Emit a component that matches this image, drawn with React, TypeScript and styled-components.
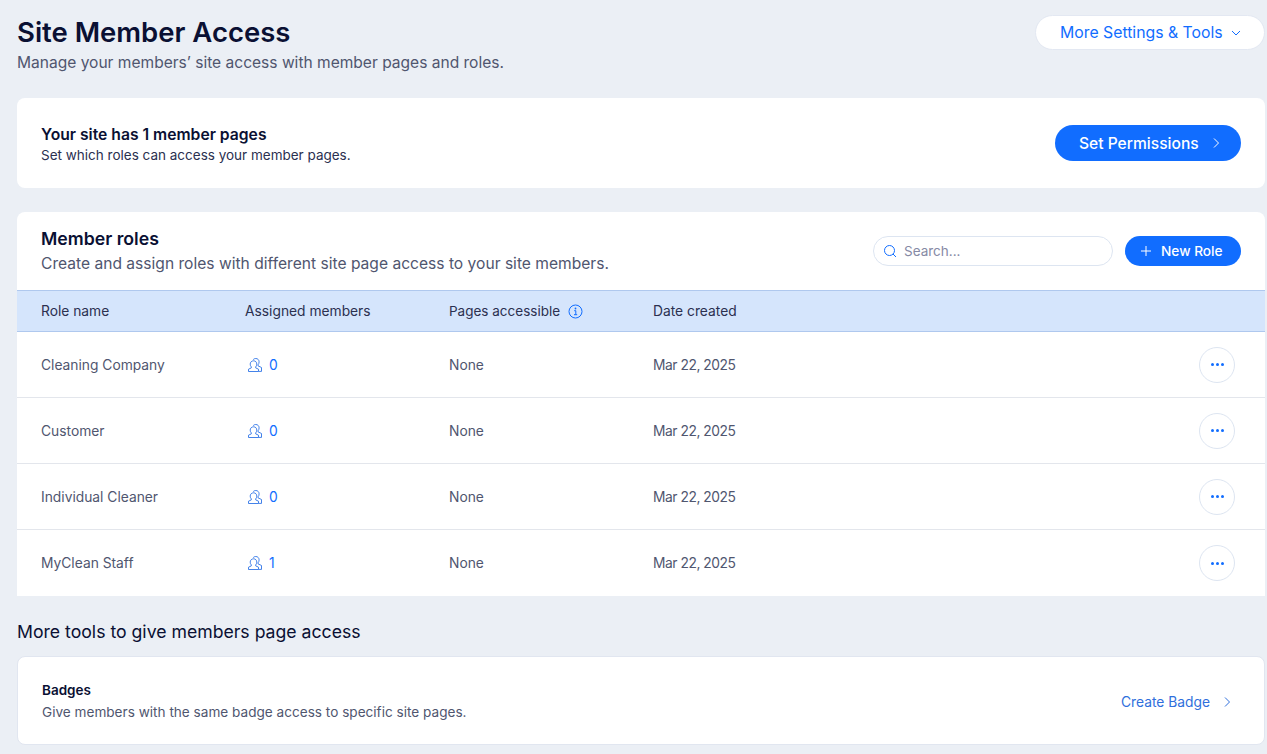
import styled, { createGlobalStyle } from "styled-components";

const GlobalStyle = createGlobalStyle`
  html, body {
    margin: 0;
    padding: 0;
    background: #ebeff5;
  }
  * {
    box-sizing: border-box;
  }
  body {
    font-family: Inter, "Noto Sans", sans-serif;
    color: #0a1033;
  }
`;

const roles = [
  { name: "Cleaning Company", members: 0 },
  { name: "Customer", members: 0 },
  { name: "Individual Cleaner", members: 0 },
  { name: "MyClean Staff", members: 1 },
];

const ChevronRight = ({ color }: { color: string }) => (
  <svg width="12" height="12" viewBox="0 0 12 12" fill="none">
    <path d="M4 1.5 8.5 6 4 10.5" stroke={color} strokeWidth="1" />
  </svg>
);

const ChevronDown = () => (
  <svg width="12" height="12" viewBox="0 0 12 12" fill="none">
    <path d="M2 4 6 8 10 4" stroke="#116dff" strokeWidth="1" />
  </svg>
);

const SearchIcon = () => (
  <svg width="14" height="14" viewBox="0 0 14 14" fill="none">
    <circle cx="6.5" cy="6.5" r="5" stroke="#116dff" strokeWidth="1" />
    <path d="M10 10l3 3" stroke="#116dff" strokeWidth="1" />
  </svg>
);

const PlusIcon = () => (
  <svg width="12" height="12" viewBox="0 0 12 12" fill="none">
    <path d="M6 1v10M1 6h10" stroke="#fff" strokeWidth="1" />
  </svg>
);

const InfoIcon = () => (
  <svg width="15" height="15" viewBox="0 0 15 15" fill="none">
    <circle cx="7.5" cy="7.5" r="6.5" stroke="#116dff" strokeWidth="1" />
    <circle cx="7.5" cy="4.5" r="0.9" fill="#116dff" />
    <path d="M6.2 6.7h1.6v3.8M6 10.7h3.2" stroke="#116dff" strokeWidth="1" />
  </svg>
);

const MembersIcon = () => (
  <svg width="14" height="14" viewBox="0 0 14 14" fill="none" stroke="#2f74e6" strokeWidth="0.9">
    <path d="M5.2 1.6C5.8.9 6.7.5 7.8.5c2 0 3.3 1.5 3.3 3.4 0 1.2-.4 2.2-1.1 2.9v1l3.5 1.7v3.9h-3" />
    <path d="M5.6 2.8c1.9 0 3.2 1.4 3.2 3.3 0 1.2-.4 2.1-1.1 2.8v1l2.8 1.3v2.3H.5v-2.3l2.8-1.3v-1c-.7-.7-1.1-1.6-1.1-2.8 0-1.9 1.4-3.3 3.4-3.3Z" />
  </svg>
);

const App = () => {
  return (
    <Page>
      <GlobalStyle />
      <Header>
        <div>
          <Title>Site Member Access</Title>
          <Subtitle>Manage your members’ site access with member pages and roles.</Subtitle>
        </div>
        <SettingsButton>
          More Settings &amp; Tools
          <ChevronDown />
        </SettingsButton>
      </Header>

      <PagesCard>
        <PagesCopy>
          <CardTitle>Your site has 1 member pages</CardTitle>
          <CardText>Set which roles can access your member pages.</CardText>
        </PagesCopy>
        <PermissionsButton>
          Set Permissions
          <ChevronRight color="#fff" />
        </PermissionsButton>
      </PagesCard>

      <RolesCard>
        <RolesHeader>
          <div>
            <RolesTitle>Member roles</RolesTitle>
            <RolesText>Create and assign roles with different site page access to your site members.</RolesText>
          </div>
          <RolesActions>
            <SearchBox>
              <SearchIcon />
              <SearchInput placeholder="Search..." readOnly />
            </SearchBox>
            <NewRoleButton>
              <PlusIcon />
              New Role
            </NewRoleButton>
          </RolesActions>
        </RolesHeader>
        <TableHead>
          <span>Role name</span>
          <span>Assigned members</span>
          <HeadWithIcon>
            Pages accessible
            <InfoIcon />
          </HeadWithIcon>
          <span>Date created</span>
        </TableHead>
        {roles.map((role) => (
          <TableRow key={role.name}>
            <span>{role.name}</span>
            <MemberCount>
              <MembersIcon />
              {role.members}
            </MemberCount>
            <span>None</span>
            <DateCell>Mar 22, 2025</DateCell>
            <MoreButton>
              <Dot />
              <Dot />
              <Dot />
            </MoreButton>
          </TableRow>
        ))}
      </RolesCard>

      <SectionTitle>More tools to give members page access</SectionTitle>
      <BadgesCard>
        <div>
          <BadgesTitle>Badges</BadgesTitle>
          <BadgesText>Give members with the same badge access to specific site pages.</BadgesText>
        </div>
        <CreateLink>
          Create Badge
          <ChevronRight color="#2f6fdc" />
        </CreateLink>
      </BadgesCard>
    </Page>
  );
};

export default App;

const Page = styled.div`
  width: 1267px;
  height: 754px;
  padding: 15px 2px 0 17px;
  overflow: hidden;
  background: #ebeff5;
`;

const Header = styled.div`
  display: flex;
  justify-content: space-between;
  align-items: flex-start;
  height: 83px;
`;

const Title = styled.h1`
  margin: 0;
  font-size: 27.5px;
  line-height: 34px;
  font-weight: 600;
  color: #0a1033;
`;

const Subtitle = styled.div`
  margin-top: 3px;
  font-size: 15.56px;
  line-height: 22px;
  color: #50566f;
`;

const SettingsButton = styled.button`
  display: flex;
  align-items: center;
  justify-content: space-between;
  width: 230px;
  height: 35px;
  padding: 0 22px 0 24px;
  border: 1px solid #e3e8f2;
  border-radius: 18px;
  background: #fff;
  color: #116dff;
  font: 400 15.8px Inter, sans-serif;
`;

const Card = styled.section`
  background: #fff;
  border-radius: 8px;
`;

const PagesCard = styled(Card)`
  display: flex;
  align-items: center;
  justify-content: space-between;
  height: 90px;
  padding: 0 24px;
`;

const PagesCopy = styled.div`
  padding-top: 2px;
`;

const CardTitle = styled.div`
  font-size: 15.7px;
  line-height: 20px;
  font-weight: 600;
  color: #0a1033;
`;

const CardText = styled.div`
  margin-top: 1px;
  font-size: 13.5px;
  line-height: 18px;
  color: #2b3050;
`;

const PermissionsButton = styled.button`
  display: flex;
  align-items: center;
  gap: 11px;
  width: 186px;
  height: 36px;
  padding: 0 0 0 24px;
  border: 0;
  border-radius: 18px;
  background: #116dff;
  color: #fff;
  font: 500 15.6px Inter, sans-serif;
`;

const RolesCard = styled(Card)`
  margin-top: 24px;
  border-radius: 8px 8px 0 0;
  overflow: hidden;
`;

const RolesHeader = styled.div`
  display: flex;
  align-items: flex-start;
  justify-content: space-between;
  height: 78px;
  padding: 16px 24px 0;
`;

const RolesTitle = styled.h2`
  margin: 0;
  font-size: 17.7px;
  line-height: 22px;
  font-weight: 600;
  color: #0a1033;
`;

const RolesText = styled.div`
  margin-top: 4px;
  font-size: 15.6px;
  line-height: 20px;
  color: #50566f;
`;

const RolesActions = styled.div`
  display: flex;
  gap: 12px;
  margin-top: 8px;
`;

const SearchBox = styled.div`
  display: flex;
  align-items: center;
  gap: 7px;
  width: 240px;
  height: 30px;
  padding: 0 9px;
  border: 1px solid #dde5f1;
  border-radius: 15px;
`;

const SearchInput = styled.input`
  flex: 1;
  min-width: 0;
  padding: 0;
  border: 0;
  outline: 0;
  color: #868aa5;
  font: 400 13.5px Inter, sans-serif;
  &::placeholder {
    color: #868aa5;
  }
`;

const NewRoleButton = styled.button`
  display: flex;
  align-items: center;
  gap: 9px;
  width: 116px;
  height: 30px;
  padding: 0 0 0 15px;
  border: 0;
  border-radius: 15px;
  background: #116dff;
  color: #fff;
  font: 500 13.7px Inter, sans-serif;
`;

const Columns = styled.div`
  display: grid;
  grid-template-columns: 204px 204px 204px 1fr 36px;
  align-items: center;
  padding: 0 30px 0 24px;
  font-size: 13.8px;
`;

const TableHead = styled(Columns)`
  height: 42px;
  background: #d5e5fc;
  border-top: 1px solid #afc8ee;
  border-bottom: 1px solid #afc8ee;
  color: #2b3050;
`;

const HeadWithIcon = styled.span`
  display: flex;
  align-items: center;
  gap: 8px;
  font-size: 13.5px;
`;

const TableRow = styled(Columns)`
  height: 66px;
  border-bottom: 1px solid #e3e6ec;
  color: #50566f;
  &:last-child {
    border-bottom: 0;
  }
`;

const MemberCount = styled.span`
  display: flex;
  align-items: center;
  gap: 7px;
  padding-left: 3px;
  color: #116dff;
`;

const DateCell = styled.span`
  letter-spacing: -0.45px;
`;

const MoreButton = styled.button`
  grid-column: 5;
  display: flex;
  align-items: center;
  justify-content: center;
  gap: 2px;
  width: 36px;
  height: 36px;
  padding: 0;
  border: 1px solid #dde5f1;
  border-radius: 50%;
  background: #fff;
`;

const Dot = styled.span`
  width: 3px;
  height: 3px;
  border-radius: 50%;
  background: #116dff;
`;

const SectionTitle = styled.h3`
  margin: 25px 0 13px;
  font-size: 17.65px;
  line-height: 22px;
  font-weight: 400;
  color: #0a1033;
`;

const BadgesCard = styled(Card)`
  display: flex;
  align-items: center;
  justify-content: space-between;
  height: 89px;
  padding: 0 31px 0 24px;
  border: 1px solid #e1e6f0;
`;

const BadgesTitle = styled.div`
  font-size: 13.5px;
  line-height: 18px;
  font-weight: 600;
  color: #0a1033;
`;

const BadgesText = styled.div`
  margin-top: 4px;
  font-size: 13.6px;
  line-height: 18px;
  color: #50566f;
`;

const CreateLink = styled.a`
  display: flex;
  align-items: center;
  gap: 11px;
  padding-top: 2px;
  font-size: 13.8px;
  color: #2f6fdc;
`;
